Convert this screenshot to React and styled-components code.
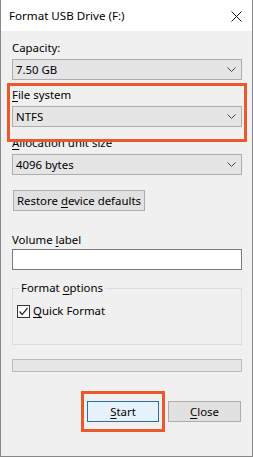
import React from 'react';
import styled, { createGlobalStyle } from 'styled-components';

const GlobalStyle = createGlobalStyle`
  html, body {
    margin: 0;
    padding: 0;
    background: #ffffff;
  }
  body {
    font-family: "Noto Sans", "Liberation Sans", sans-serif;
    font-size: 11.4px;
    color: #000;
  }
  * {
    box-sizing: border-box;
  }
`;

const Window = styled.div`
  width: 253px;
  height: 457px;
  border: 1px solid #888;
  border-top: none;
  background: #f0f0f0;
  display: flex;
  flex-direction: column;
`;

const TitleBar = styled.div`
  height: 31px;
  background: #fff;
  display: flex;
  align-items: center;
  justify-content: space-between;
  padding: 0 10px 0 8px;
`;

const Title = styled.span`
  font-size: 11.6px;
  line-height: 16px;
`;

const CloseX = styled.svg`
  width: 11px;
  height: 11px;
  margin-top: 1px;
`;

const Body = styled.div`
  flex: 1;
  display: flex;
  flex-direction: column;
  padding: 9px 10px 0 11px;
`;

const Field = styled.div`
  display: flex;
  flex-direction: column;
  margin-bottom: ${({ gap }) => (gap !== undefined ? gap : 7)}px;
`;

const Highlight = styled.div`
  position: relative;
  &::before {
    content: '';
    position: absolute;
    top: ${({ inset }) => inset[0]}px;
    right: ${({ inset }) => inset[1]}px;
    bottom: ${({ inset }) => inset[2]}px;
    left: ${({ inset }) => inset[3]}px;
    border: 3px solid #e9592c;
    pointer-events: none;
  }
`;

const Label = styled.div`
  line-height: 16px;
  height: 16px;
  margin-bottom: ${({ gap }) => (gap !== undefined ? gap : 3)}px;
  white-space: nowrap;
`;

const U = styled.span`
  text-decoration: underline;
  text-underline-offset: 2px;
  text-decoration-thickness: 1px;
`;

const SelectBox = styled.div`
  height: 21px;
  border: 1px solid #adadad;
  background: #e5e5e5;
  display: flex;
  align-items: center;
  justify-content: space-between;
  padding: 0 5px 0 3px;
  line-height: 16px;
`;

const Chevron = styled.svg`
  width: 9px;
  height: 5px;
`;

const Button = styled.div`
  height: 21px;
  width: ${({ w }) => w}px;
  border: 1px solid ${({ primary }) => (primary ? '#2c6f9e' : '#adadad')};
  background: ${({ primary }) => (primary ? '#e5f1fb' : '#e1e1e1')};
  display: flex;
  align-items: center;
  justify-content: center;
  line-height: 16px;
  white-space: nowrap;
`;

const RestoreRow = styled.div`
  display: flex;
  margin: 15px 0 21px 1px;
`;

const TextInput = styled.div`
  height: 21px;
  border: 1px solid #7a7a7a;
  background: #fff;
`;

const Group = styled.fieldset`
  margin: 10px 0 0 0;
  padding: 0 4px;
  border: 1px solid #dcdcdc;
  min-width: 0;
`;

const Legend = styled.legend`
  padding: 0 2px;
  margin-left: 2px;
  line-height: 16px;
`;

const GroupContent = styled.div`
  height: 48px;
  padding-top: 7px;
`;

const CheckRow = styled.div`
  display: flex;
  align-items: center;
  gap: 3px;
  line-height: 16px;
`;

const CheckBox = styled.div`
  width: 13px;
  height: 13px;
  border: 1px solid #333;
  background: #fff;
  display: flex;
  align-items: center;
  justify-content: center;
`;

const Progress = styled.div`
  height: 13px;
  margin-top: 14px;
  border: 1px solid #bcbcbc;
  background: #e6e6e6;
`;

const ButtonRow = styled.div`
  display: flex;
  justify-content: flex-end;
  gap: 9px;
  margin-top: 29px;
  padding-right: 1px;
`;

const Select = ({ value }) => (
  <SelectBox>
    <span>{value}</span>
    <Chevron viewBox="0 0 9 5">
      <path d="M0.5 0.5 L4.5 4.5 L8.5 0.5" fill="none" stroke="#444" strokeWidth="1" />
    </Chevron>
  </SelectBox>
);

export default function App() {
  return (
    <>
      <GlobalStyle />
      <Window>
        <TitleBar>
          <Title>Format USB Drive (F:)</Title>
          <CloseX viewBox="0 0 11 11">
            <path d="M0.5 0.5 L10.5 10.5 M10.5 0.5 L0.5 10.5" stroke="#111" strokeWidth="1" fill="none" />
          </CloseX>
        </TitleBar>
        <Body>
          <Field>
            <Label>Capacity:</Label>
            <Select value="7.50 GB" />
          </Field>
          <Highlight inset={[-4, -5, -7, -5]}>
            <Field gap={8}>
              <Label><U>F</U>ile system</Label>
              <Select value="NTFS" />
            </Field>
          </Highlight>
          <Field gap={0}>
            <Label><U>A</U>llocation unit size</Label>
            <Select value="4096 bytes" />
          </Field>
          <RestoreRow>
            <Button w={132}><span>Restore <U>d</U>evice defaults</span></Button>
          </RestoreRow>
          <Field gap={0}>
            <Label gap={1}>Volume <U>l</U>abel</Label>
            <TextInput />
          </Field>
          <Group>
            <Legend>Format <U>o</U>ptions</Legend>
            <GroupContent>
              <CheckRow>
                <CheckBox>
                  <svg width="11" height="11" viewBox="0 0 11 11">
                    <path d="M1.5 5.5 L4.2 8.5 L9.5 1.8" fill="none" stroke="#222" strokeWidth="1.2" />
                  </svg>
                </CheckBox>
                <span><U>Q</U>uick Format</span>
              </CheckRow>
            </GroupContent>
          </Group>
          <Progress />
          <ButtonRow>
            <Highlight inset={[-10, -6, -10, -6]}>
              <Button primary w={72}><span><U>S</U>tart</span></Button>
            </Highlight>
            <Button w={73}><span><U>C</U>lose</span></Button>
          </ButtonRow>
        </Body>
      </Window>
    </>
  );
}
